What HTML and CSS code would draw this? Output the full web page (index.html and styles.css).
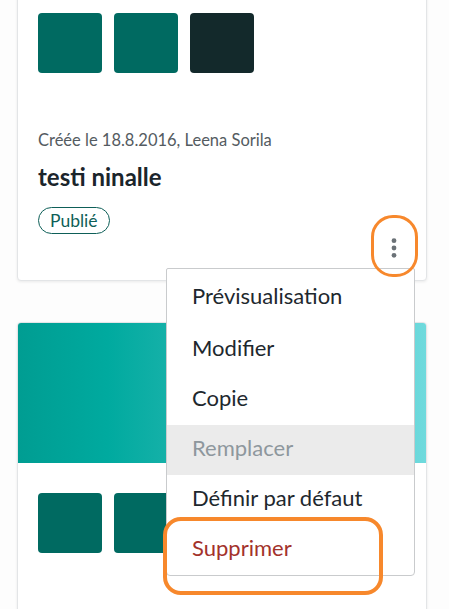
FILE: index.html
```html
<!DOCTYPE html>
<html lang="fr">
<head>
<meta charset="utf-8">
<title>Thèmes</title>
<link rel="stylesheet" href="styles.css">
</head>
<body>
<div class="page">
  <div class="card card-first">
    <div class="swatches">
      <span class="swatch teal"></span>
      <span class="swatch teal"></span>
      <span class="swatch dark"></span>
    </div>
    <div class="meta">Créée le 18.8.2016, Leena Sorila</div>
    <div class="title">testi ninalle</div>
    <div class="status-row"><span class="pill">Publié</span></div>
    <div class="actions">
      <button class="kebab" aria-label="Actions">
        <svg width="6" height="20" viewBox="0 0 6 20"><circle cx="3" cy="2.7" r="2.4" fill="#6b7277"/><circle cx="3" cy="10" r="2.4" fill="#6b7277"/><circle cx="3" cy="17.3" r="2.4" fill="#6b7277"/></svg>
      </button>
      <span class="highlight hl-kebab"></span>
      <ul class="menu">
        <li>Prévisualisation</li>
        <li>Modifier</li>
        <li>Copie</li>
        <li class="disabled">Remplacer</li>
        <li>Définir par défaut</li>
        <li class="danger">Supprimer</li>
      </ul>
      <span class="highlight hl-delete"></span>
    </div>
  </div>
  <div class="card card-second">
    <div class="banner"></div>
    <div class="swatches">
      <span class="swatch teal"></span>
      <span class="swatch teal"></span>
      <span class="swatch dark"></span>
    </div>
  </div>
</div>
</body>
</html>
```

FILE: styles.css
```css
* { box-sizing: border-box; }
html, body { margin: 0; padding: 0; background: #fdfdfd; }
body {
  font-family: Lato, "Open Sans", sans-serif;
  color: #1e282e;
}
.page {
  height: 609px;
  overflow: hidden;
  padding: 0 22px 0 17px;
  display: flex;
  flex-direction: column;
  gap: 41px;
}
.card {
  flex: none;
  background: #fff;
  border: 1px solid #e3e5e7;
  border-radius: 4px;
  box-shadow: 0 1px 3px rgba(0,0,0,0.08);
  position: relative;
}
.card-first {
  margin-top: -20px;
  padding: 32px 20px 0 20px;
  height: 301px;
}
.swatches { display: flex; gap: 12px; }
.swatch {
  width: 64px; height: 60px;
  border-radius: 4px;
  display: block;
}
.swatch.teal { background: #006a61; }
.swatch.dark { background: #13292b; }
.meta {
  margin-top: 56px;
  font-size: 16.5px;
  color: #545b61;
  line-height: 22px;
}
.title {
  margin-top: 11px;
  font-size: 24px;
  font-weight: 700;
  line-height: 30px;
  color: #1b252b;
}
.status-row { margin-top: 15px; display: flex; }
.pill {
  display: inline-block;
  border: 1px solid #0e5f58;
  color: #0e5f58;
  border-radius: 14px;
  font-size: 17.5px;
  line-height: 25px;
  padding: 0 11px;
}
.kebab {
  position: absolute;
  right: 22px;
  top: 256px;
  border: 0;
  background: none;
  padding: 0;
  width: 20px; height: 22px;
  display: flex; align-items: center; justify-content: center;
}
.highlight {
  position: absolute;
  border: 3.5px solid #f7882c;
  z-index: 3;
  pointer-events: none;
}
.hl-kebab {
  left: 353px; top: 234px;
  width: 47px; height: 62px;
  border-radius: 22px;
}
.menu {
  position: absolute;
  z-index: 2;
  left: 148px;
  top: 287px;
  width: 249px;
  margin: 0;
  padding: 6px 0 0 0;
  list-style: none;
  background: #fff;
  border: 1px solid #c9cbcd;
  border-radius: 2px 2px 4px 4px;
}
.menu li {
  height: 50px;
  line-height: 46px;
  padding-left: 25px;
  font-size: 22px;
  color: #1e282e;
}
.menu li:first-child { line-height: 42px; }
.menu li.disabled { background: #ebebeb; color: #8e979d; }
.menu li.danger { color: #a3322b; }
.hl-delete {
  left: 145px; top: 536px;
  width: 220px; height: 78px;
  border-width: 4px;
  border-radius: 18px;
}
.card-second {
  height: 320px;
  overflow: hidden;
}
.banner {
  height: 140px;
  background: linear-gradient(90deg, #009d92 0%, #00aa9f 22%, #17b1a9 38%, #6fdadd 100%);
}
.card-second .swatches { padding: 30px 20px 0 20px; }
```
